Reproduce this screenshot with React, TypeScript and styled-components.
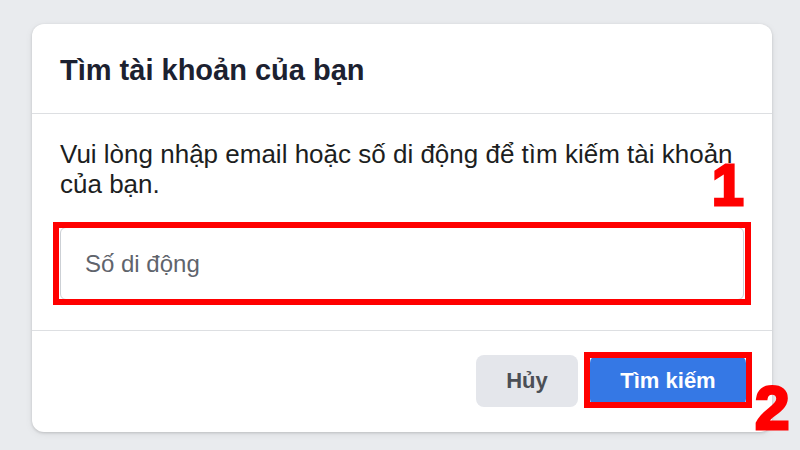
import React from "react";
import styled, { createGlobalStyle } from "styled-components";

const GlobalStyle = createGlobalStyle`
  html, body {
    margin: 0;
    padding: 0;
    background: #e9ebee;
    font-family: "Liberation Sans", Arial, Helvetica, sans-serif;
  }
  * { box-sizing: border-box; }
`;

const Page = styled.div`
  position: relative;
  width: 800px;
  height: 450px;
  overflow: hidden;
  background: #e9ebee;
  padding: 24px 28px 18px 32px;
`;

const Card = styled.div`
  width: 740px;
  height: 408px;
  background: #ffffff;
  border-radius: 12px;
  box-shadow: 0 1px 3px rgba(0, 0, 0, 0.16), 0 2px 8px rgba(0, 0, 0, 0.06);
  display: flex;
  flex-direction: column;
`;

const Header = styled.div`
  height: 90px;
  padding: 29px 28px 0 28px;
  border-bottom: 1px solid #dddfe2;
`;

const Title = styled.h2`
  margin: 0;
  font-size: 29px;
  line-height: 34px;
  font-weight: 700;
  color: #1c2130;
`;

const Body = styled.div`
  padding: 25px 28px 30px 28px;
  border-bottom: 1px solid #dddfe2;
`;

const Description = styled.p`
  margin: 0;
  font-size: 26px;
  line-height: 30px;
  color: #1c1e21;
`;

const Annotated = styled.div<{ $inset: string; $thick: number }>`
  position: relative;
  &::after {
    content: "";
    position: absolute;
    inset: ${(p) => p.$inset};
    border: ${(p) => p.$thick}px solid #ff0000;
    pointer-events: none;
  }
`;

const InputWrap = styled(Annotated)`
  margin-top: 28px;
`;

const Input = styled.input`
  display: block;
  width: 100%;
  height: 73px;
  border: 1px solid #ccd0d5;
  border-radius: 6px;
  padding: 0 24px;
  font-family: "Liberation Sans", Arial, Helvetica, sans-serif;
  font-size: 24px;
  color: #1c1e21;
  outline: none;
  background: #fff;
  &::placeholder {
    color: #5f646c;
  }
`;

const Footer = styled.div`
  flex: 1;
  display: flex;
  align-items: center;
  justify-content: flex-end;
  gap: 12px;
  padding: 0 26px 2px 0;
`;

const Button = styled.button<{ $primary?: boolean; $w: number }>`
  width: ${(p) => p.$w}px;
  height: 52px;
  border: none;
  border-radius: 8px;
  font-family: "Liberation Sans", Arial, Helvetica, sans-serif;
  font-size: 22px;
  font-weight: 700;
  cursor: pointer;
  background: ${(p) => (p.$primary ? "#3578e5" : "#e4e6eb")};
  color: ${(p) => (p.$primary ? "#ffffff" : "#4b4f56")};
`;

const StepNumber = styled.span<{ $size: number; $left: number; $top: number }>`
  position: absolute;
  left: ${(p) => p.$left}px;
  top: ${(p) => p.$top}px;
  font-family: "Liberation Sans", Arial, Helvetica, sans-serif;
  font-weight: 700;
  font-size: ${(p) => p.$size}px;
  line-height: ${(p) => p.$size}px;
  color: #ff0000;
  -webkit-text-stroke: 3px #ff0000;
`;

export default function App() {
  return (
    <>
      <GlobalStyle />
      <Page>
        <Card>
          <Header>
            <Title>Tìm tài khoản của bạn</Title>
          </Header>
          <Body>
            <Description>
              Vui lòng nhập email hoặc số di động để tìm kiếm tài khoản của bạn.
            </Description>
            <InputWrap $inset="-5px -7px" $thick={6}>
              <Input placeholder="Số di động" />
            </InputWrap>
          </Body>
          <Footer>
            <Button $w={102}>Hủy</Button>
            <Annotated $inset="-3px -6px -1px -6px" $thick={6}>
              <Button $primary $w={156}>
                Tìm kiếm
              </Button>
            </Annotated>
          </Footer>
        </Card>
        <StepNumber $size={57} $left={712} $top={157}>
          1
        </StepNumber>
        <StepNumber $size={62} $left={755} $top={377}>
          2
        </StepNumber>
      </Page>
    </>
  );
}
